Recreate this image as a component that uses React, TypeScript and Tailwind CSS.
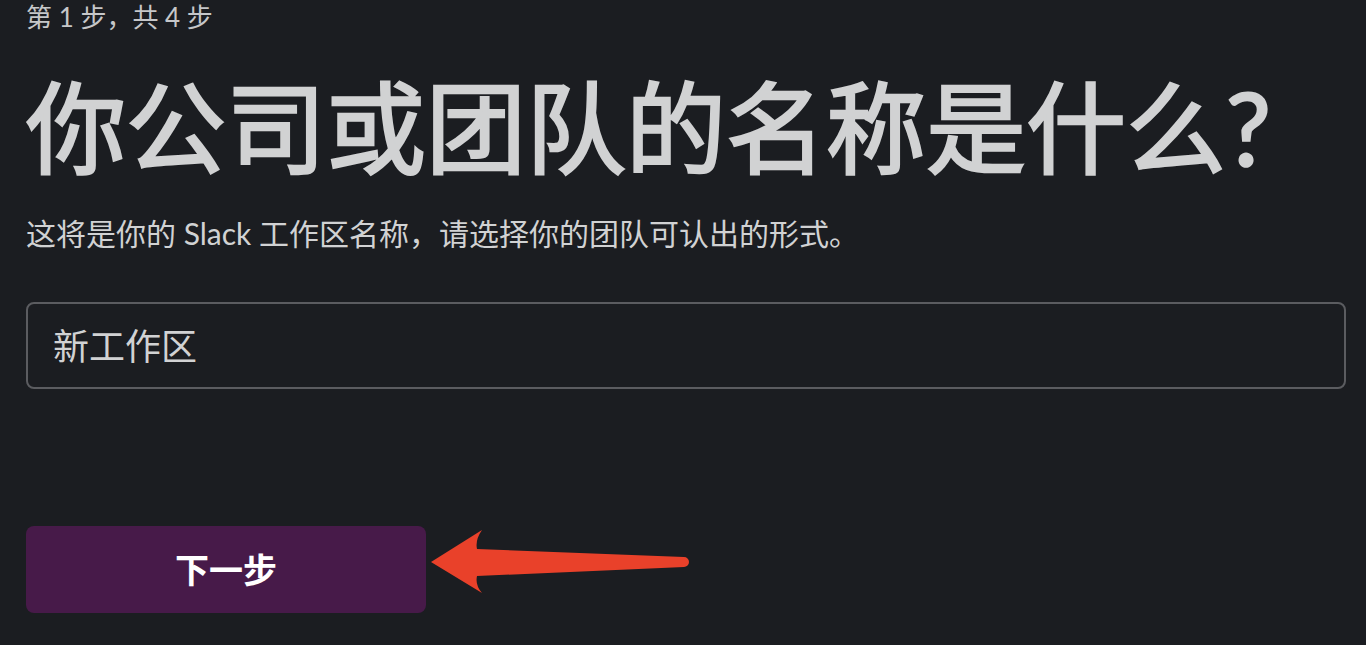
const font = { fontFamily: 'Lato, "Noto Sans CJK SC", sans-serif' };

const Arrow = () => (
  <svg width="266" height="87" viewBox="0 0 266 87" className="ml-[2px] shrink-0">
    <path
      d="M3 36 L54 4 Q47 14 49 23 L256 31 A5 5 0 0 1 256 41 L49 50 Q47 59 54 67 Z"
      fill="#e9412a"
    />
  </svg>
);

export default function App() {
  return (
    <div
      className="min-h-screen w-full bg-[#1b1d21] pl-[26px] pr-[20px] text-[#d1d2d3]"
      style={font}
    >
      <div className="-mt-[1px] text-[26px] leading-[36px] text-[#c6c7c9]">第 1 步，共 4 步</div>

      <h1 className="mt-[32px] text-[100px] font-normal leading-[120px] [-webkit-text-stroke:2.5px_#d1d2d3]">
        你公司或团队的名称是什么?
      </h1>

      <p className="mt-[24px] text-[30px] leading-[45px]">
        这将是你的 Slack 工作区名称，请选择你的团队可认出的形式。
      </p>

      <div className="mt-[46px] flex h-[87px] items-center rounded-[8px] border-2 border-[#5b5c60] pl-[25px]">
        <span className="text-[36px] text-[#d1d2d3]">新工作区</span>
      </div>

      <div className="mt-[137px] flex items-center">
        <button className="flex h-[87px] w-[400px] items-center justify-center rounded-[8px] bg-[#471a49] text-[34px] font-bold text-white">
          下一步
        </button>
        <Arrow />
      </div>
    </div>
  );
}
